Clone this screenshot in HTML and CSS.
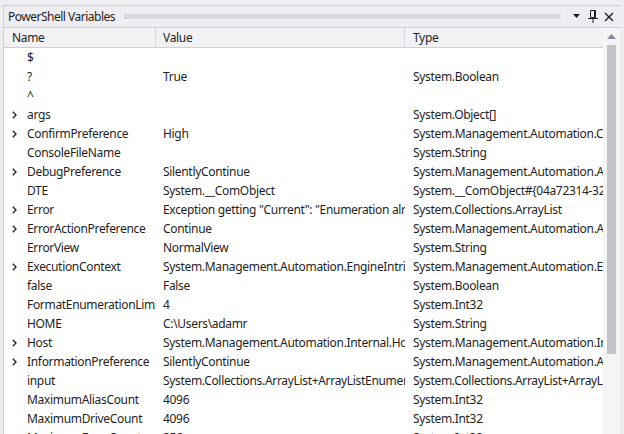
FILE: index.html
```html
<!DOCTYPE html>
<html>
<head>
<meta charset="utf-8">
<link rel="stylesheet" href="styles.css">
</head>
<body>
<div class="panel">
  <div class="titlebar">
    <span class="title">PowerShell Variables</span>
    <span class="grip"></span>
    <span class="tbtn"><svg width="8" height="5" viewBox="0 0 8 5"><polygon points="0,0 7,0 3.5,4" fill="#1e1e1e"/></svg></span>
    <span class="tbtn"><svg width="10" height="13" viewBox="0 0 10 13"><path d="M2.5 0.5h5v7h-5z M6.5 0.5v7" fill="none" stroke="#1e1e1e" stroke-width="1"/><path d="M0 8.5h10 M5 8.5v4.5" fill="none" stroke="#1e1e1e" stroke-width="1"/></svg></span>
    <span class="tbtn"><svg width="10" height="10" viewBox="0 0 10 10"><path d="M1 1L9 9M9 1L1 9" stroke="#1e1e1e" stroke-width="1.4"/></svg></span>
  </div>
  <div class="content">
    <div class="grid">
      <div class="head">
        <div class="hc c1">Name</div>
        <div class="hc c2">Value</div>
        <div class="hc c3">Type</div>
      </div>
      <div class="rows">
        <div class="row"><div class="cell c1"><span class="exp"></span>$</div><div class="cell c2"></div><div class="cell c3"></div></div>
        <div class="row"><div class="cell c1"><span class="exp"></span>?</div><div class="cell c2">True</div><div class="cell c3">System.Boolean</div></div>
        <div class="row"><div class="cell c1"><span class="exp"></span>^</div><div class="cell c2"></div><div class="cell c3"></div></div>
        <div class="row"><div class="cell c1"><span class="exp"><svg width="5" height="8" viewBox="0 0 5 8"><path d="M0.8 0.8L4 4L0.8 7.2" fill="none" stroke="#1e1e1e" stroke-width="1.3"/></svg></span>args</div><div class="cell c2"></div><div class="cell c3">System.Object[]</div></div>
        <div class="row"><div class="cell c1"><span class="exp"><svg width="5" height="8" viewBox="0 0 5 8"><path d="M0.8 0.8L4 4L0.8 7.2" fill="none" stroke="#1e1e1e" stroke-width="1.3"/></svg></span>ConfirmPreference</div><div class="cell c2">High</div><div class="cell c3">System.Management.Automation.ConfirmImpact</div></div>
        <div class="row"><div class="cell c1"><span class="exp"></span>ConsoleFileName</div><div class="cell c2"></div><div class="cell c3">System.String</div></div>
        <div class="row"><div class="cell c1"><span class="exp"><svg width="5" height="8" viewBox="0 0 5 8"><path d="M0.8 0.8L4 4L0.8 7.2" fill="none" stroke="#1e1e1e" stroke-width="1.3"/></svg></span>DebugPreference</div><div class="cell c2">SilentlyContinue</div><div class="cell c3">System.Management.Automation.ActionPreference</div></div>
        <div class="row"><div class="cell c1"><span class="exp"></span>DTE</div><div class="cell c2">System.__ComObject</div><div class="cell c3">System.__ComObject#{04a72314-32e9-48e2-9b87-a63603454f3e}</div></div>
        <div class="row"><div class="cell c1"><span class="exp"><svg width="5" height="8" viewBox="0 0 5 8"><path d="M0.8 0.8L4 4L0.8 7.2" fill="none" stroke="#1e1e1e" stroke-width="1.3"/></svg></span>Error</div><div class="cell c2">Exception getting "Current": "Enumeration already finished."</div><div class="cell c3">System.Collections.ArrayList</div></div>
        <div class="row"><div class="cell c1"><span class="exp"><svg width="5" height="8" viewBox="0 0 5 8"><path d="M0.8 0.8L4 4L0.8 7.2" fill="none" stroke="#1e1e1e" stroke-width="1.3"/></svg></span>ErrorActionPreference</div><div class="cell c2">Continue</div><div class="cell c3">System.Management.Automation.ActionPreference</div></div>
        <div class="row"><div class="cell c1"><span class="exp"></span>ErrorView</div><div class="cell c2">NormalView</div><div class="cell c3">System.String</div></div>
        <div class="row"><div class="cell c1"><span class="exp"><svg width="5" height="8" viewBox="0 0 5 8"><path d="M0.8 0.8L4 4L0.8 7.2" fill="none" stroke="#1e1e1e" stroke-width="1.3"/></svg></span>ExecutionContext</div><div class="cell c2">System.Management.Automation.EngineIntrinsics</div><div class="cell c3">System.Management.Automation.EngineIntrinsics</div></div>
        <div class="row"><div class="cell c1"><span class="exp"></span>false</div><div class="cell c2">False</div><div class="cell c3">System.Boolean</div></div>
        <div class="row"><div class="cell c1"><span class="exp"></span>FormatEnumerationLimit</div><div class="cell c2">4</div><div class="cell c3">System.Int32</div></div>
        <div class="row"><div class="cell c1"><span class="exp"></span>HOME</div><div class="cell c2">C:\Users\adamr</div><div class="cell c3">System.String</div></div>
        <div class="row"><div class="cell c1"><span class="exp"><svg width="5" height="8" viewBox="0 0 5 8"><path d="M0.8 0.8L4 4L0.8 7.2" fill="none" stroke="#1e1e1e" stroke-width="1.3"/></svg></span>Host</div><div class="cell c2">System.Management.Automation.Internal.Host.InternalHost</div><div class="cell c3">System.Management.Automation.Internal.Host.InternalHost</div></div>
        <div class="row"><div class="cell c1"><span class="exp"><svg width="5" height="8" viewBox="0 0 5 8"><path d="M0.8 0.8L4 4L0.8 7.2" fill="none" stroke="#1e1e1e" stroke-width="1.3"/></svg></span>InformationPreference</div><div class="cell c2">SilentlyContinue</div><div class="cell c3">System.Management.Automation.ActionPreference</div></div>
        <div class="row"><div class="cell c1"><span class="exp"></span>input</div><div class="cell c2">System.Collections.ArrayList+ArrayListEnumeratorSimple</div><div class="cell c3">System.Collections.ArrayList+ArrayListEnumeratorSimple</div></div>
        <div class="row"><div class="cell c1"><span class="exp"></span>MaximumAliasCount</div><div class="cell c2">4096</div><div class="cell c3">System.Int32</div></div>
        <div class="row"><div class="cell c1"><span class="exp"></span>MaximumDriveCount</div><div class="cell c2">4096</div><div class="cell c3">System.Int32</div></div>
        <div class="row"><div class="cell c1"><span class="exp"></span>MaximumErrorCount</div><div class="cell c2">256</div><div class="cell c3">System.Int32</div></div>
      </div>
    </div>
    <div class="scrollbar">
      <div class="sb-up"><svg width="9" height="5" viewBox="0 0 9 5"><polygon points="0,5 9,5 4.5,0" fill="#868999"/></svg></div>
      <div class="sb-thumb"></div>
    </div>
  </div>
</div>
</body>
</html>
```

FILE: styles.css
```css
html, body {
  margin: 0;
  padding: 0;
  height: 434px;
  overflow: hidden;
  background: #eeeef2;
}
body {
  font-family: "Noto Sans", "Open Sans", sans-serif;
  font-size: 12px;
  letter-spacing: -0.32px;
  color: #1e1e1e;
}
.panel {
  margin: 5px 3px 0 3px;
  border-left: 1px solid #ccced8;
  border-top: 1px solid #ccced8;
  height: 429px;
  display: flex;
  flex-direction: column;
}
.titlebar {
  height: 21px;
  border-bottom: 1px solid #ccced8;
  display: flex;
  align-items: center;
  padding-left: 4px;
  padding-right: 4px;
}
.title {
  white-space: nowrap;
  line-height: 21px;
  letter-spacing: -0.5px;
}
.grip {
  flex: 1;
  height: 5px;
  margin: 0 8px 0 9px;
  background-image: repeating-conic-gradient(#c4c4cc 0 25%, transparent 0 50%);
  background-size: 2px 2px;
}
.tbtn {
  width: 16px;
  height: 21px;
  display: flex;
  align-items: center;
  justify-content: center;
}
.content {
  flex: 1;
  display: flex;
  min-height: 0;
}
.grid {
  width: 599px;
  display: flex;
  flex-direction: column;
  background: #fff;
}
.head {
  height: 19px;
  border-bottom: 1px solid #ccced8;
  background: #f2f2f4;
  display: flex;
}
.hc {
  line-height: 19px;
  white-space: nowrap;
  overflow: hidden;
}
.head .c1, .head .c2 {
  border-right: 1px solid #d4d5dc;
}
.c1 { width: 151px; padding-left: 8px; box-sizing: content-box; }
.head .c1 { width: 143px; }
.head .c2 { width: 241px; padding-left: 7px; }
.head .c3 { flex: 1; padding-left: 8px; }
.rows {
  flex: 1;
  overflow: hidden;
}
.row {
  height: 19px;
  display: flex;
  align-items: center;
}
.cell {
  white-space: nowrap;
  overflow: hidden;
  line-height: 19px;
  box-sizing: border-box;
}
.row .c1 { width: 152px; padding-left: 8px; display: flex; align-items: center; }
.row .c2 { width: 249px; padding-left: 7px; }
.row .c3 { flex: 1; padding-left: 8px; }
.exp {
  flex: 0 0 15px;
  width: 15px;
  display: flex;
  align-items: center;
}
.scrollbar {
  width: 18px;
  background: #f5f5f5;
  display: flex;
  flex-direction: column;
  align-items: center;
  padding-top: 5px;
  box-sizing: border-box;
  border-right: 1px solid #eeeef2;
}
.sb-up {
  height: 6px;
  display: flex;
  align-items: center;
  margin-bottom: 6px;
}
.sb-thumb {
  width: 9px;
  height: 309px;
  background: #c2c3c9;
}
```
